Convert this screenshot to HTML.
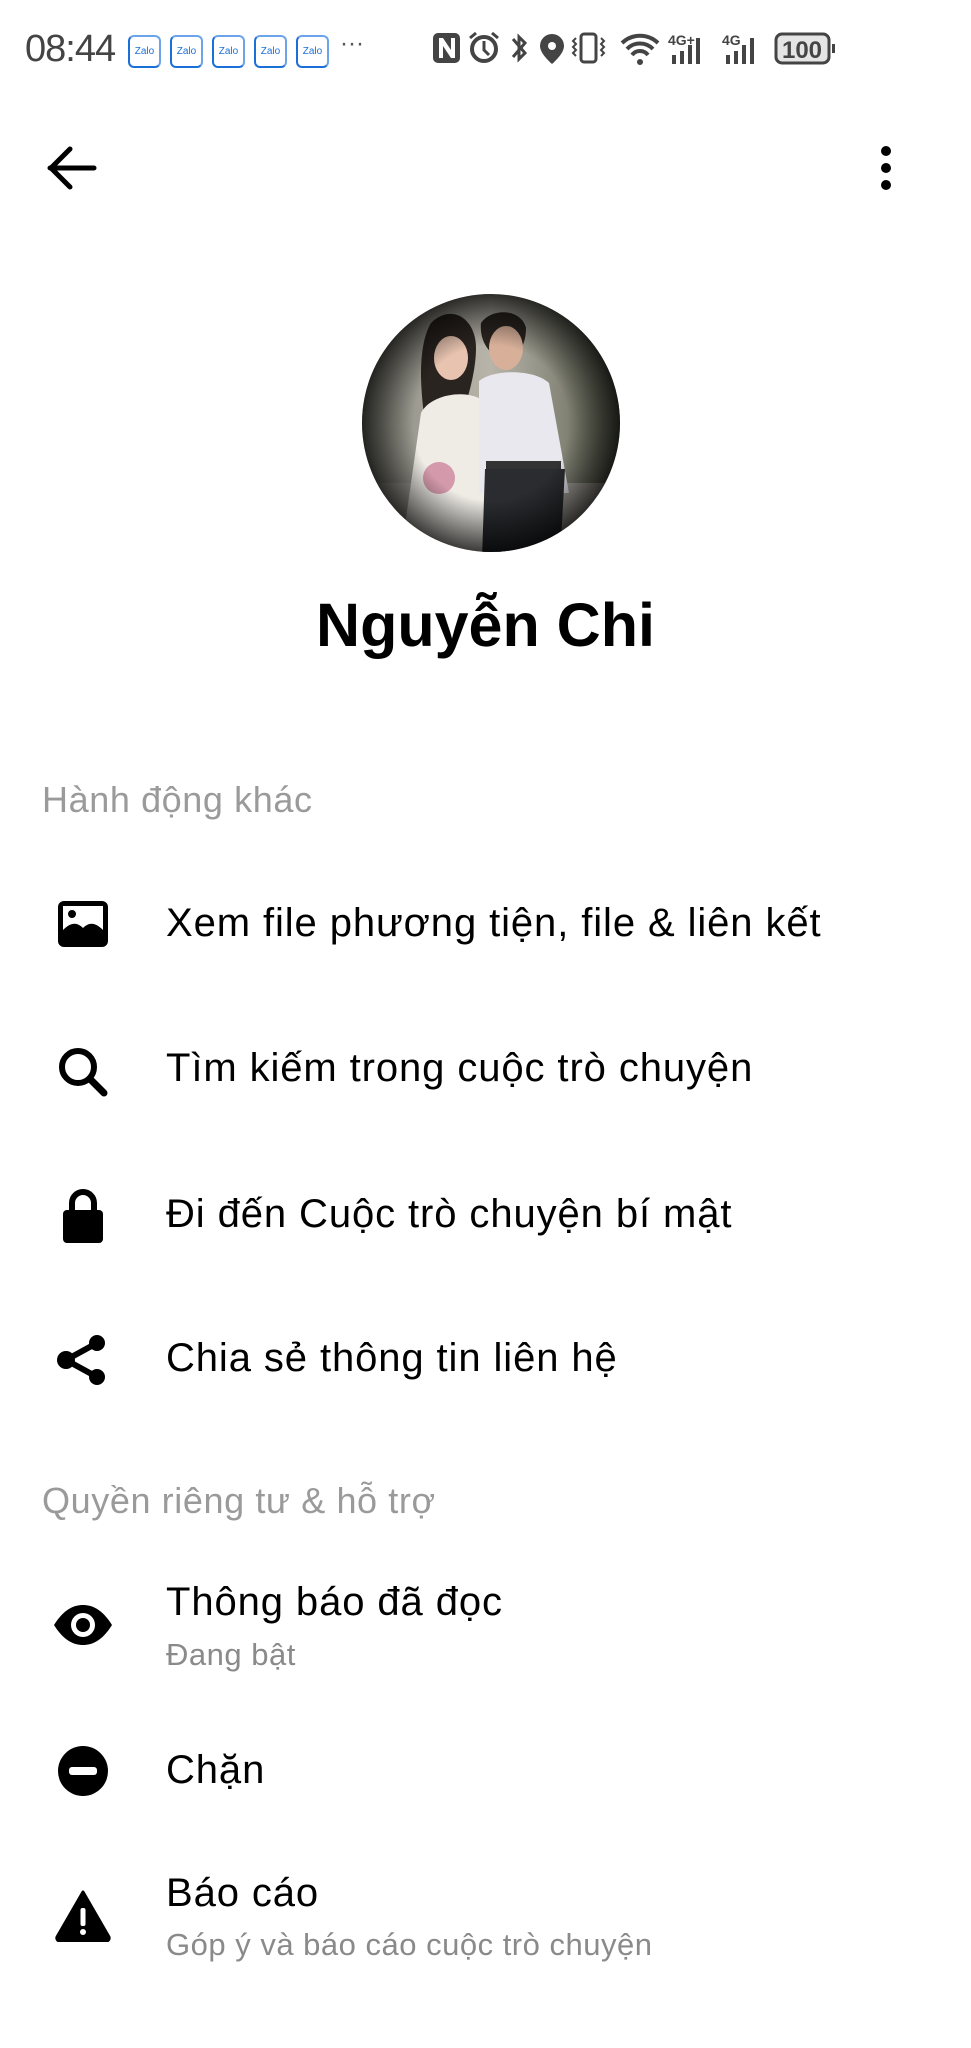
<!DOCTYPE html>
<html><head><meta charset="utf-8"><style>
html,body{margin:0;padding:0;background:#fff;}
body{width:971px;height:2048px;position:relative;overflow:hidden;font-family:"Liberation Sans","DejaVu Sans",sans-serif;color:#000;}
.a{position:absolute;white-space:nowrap;}
.sec{font-size:36px;letter-spacing:0.6px;color:#9a9a9a;left:42px;}
.item{font-size:40px;letter-spacing:0.9px;left:166px;}
.sub{font-size:31px;letter-spacing:0.5px;color:#8a8a8a;left:166px;}
.zalo{position:absolute;top:35px;width:29px;height:29px;border:2px solid #1a6fd8;border-top-color:#6ba4ea;border-right-color:#6ba4ea;border-radius:6px;background:#fff;font-size:10px;color:#1a6fd8;text-align:center;line-height:29px;}
</style></head><body>
<div class="a" style="left:25px;top:28px;font-size:38px;color:#444;letter-spacing:-1px;">08:44</div>
<div class="zalo" style="left:128px">Zalo</div>
<div class="zalo" style="left:170px">Zalo</div>
<div class="zalo" style="left:212px">Zalo</div>
<div class="zalo" style="left:254px">Zalo</div>
<div class="zalo" style="left:296px">Zalo</div>
<div class="a" style="left:340px;top:30px;font-size:24px;color:#555;">···</div>
<svg class="a" style="left:420px;top:28px" width="420" height="40" viewBox="0 0 420 40" fill="#444">
 <rect x="13" y="5" width="27" height="30" rx="5"/><path d="M19 10v20h4V18l8 12h4V10h-4v12L23 10z" fill="#fff"/>
 <circle cx="64" cy="21" r="12" fill="none" stroke="#444" stroke-width="4"/><path d="M64 13v9l5 5" stroke="#444" stroke-width="3" fill="none"/><path d="M50 10l6-5M78 10l-6-5" stroke="#444" stroke-width="3"/>
 <path d="M93 11l12 14-6 6V9l6 6-12 14" stroke="#444" stroke-width="3" fill="none"/>
 <path d="M132 6a12 12 0 0 1 12 12c0 8-12 18-12 18s-12-10-12-18a12 12 0 0 1 12-12z"/><circle cx="132" cy="18" r="4" fill="#fff"/>
 <rect x="161" y="6" width="15" height="28" rx="3" fill="none" stroke="#444" stroke-width="3"/><path d="M156 10l-3 3 3 3-3 3 3 3-3 3 3 3M181 10l3 3-3 3 3 3-3 3 3 3-3 3" stroke="#444" stroke-width="2" fill="none"/>
 <path d="M202 15a26 26 0 0 1 36 0M207 21a18 18 0 0 1 26 0M212 27a10 10 0 0 1 16 0" stroke="#444" stroke-width="4" fill="none"/><circle cx="220" cy="34" r="3"/>
 <text x="248" y="17" font-size="14" font-weight="bold" font-family="Liberation Sans">4G+</text>
 <rect x="252" y="27" width="4" height="9"/><rect x="260" y="23" width="4" height="13"/><rect x="268" y="17" width="4" height="19"/><rect x="276" y="10" width="4" height="26"/>
 <text x="302" y="17" font-size="14" font-weight="bold" font-family="Liberation Sans">4G</text>
 <rect x="306" y="27" width="4" height="9"/><rect x="314" y="23" width="4" height="13"/><rect x="322" y="17" width="4" height="19"/><rect x="330" y="10" width="4" height="26"/>
 <rect x="356" y="6" width="53" height="29" rx="6" fill="#e4e4e4" stroke="#444" stroke-width="3"/>
 <text x="382" y="30" font-size="24" font-weight="bold" text-anchor="middle" font-family="Liberation Sans">100</text>
 <rect x="412" y="16" width="3" height="9"/>
</svg>
<svg class="a" style="left:46px;top:146px" width="52" height="44" viewBox="0 0 52 44"><path d="M4 22h44M24 3L5 22l19 19" stroke="#000" stroke-width="5" fill="none" stroke-linecap="round" stroke-linejoin="round"/></svg>
<svg class="a" style="left:876px;top:144px" width="20" height="48"><circle cx="10" cy="7" r="5"/><circle cx="10" cy="24" r="5"/><circle cx="10" cy="41" r="5"/></svg>
<svg class="a" style="left:361px;top:293px" width="260" height="260" viewBox="0 0 260 260">
 <defs>
  <clipPath id="c"><circle cx="130" cy="130" r="129"/></clipPath>
  <radialGradient id="v" cx="50%" cy="50%" r="50%"><stop offset="60%" stop-color="#000" stop-opacity="0"/><stop offset="100%" stop-color="#000" stop-opacity=".75"/></radialGradient>
  <linearGradient id="bg" x1="0" y1="0" x2="1" y2="0"><stop offset="0" stop-color="#8a8a80"/><stop offset=".5" stop-color="#b8b4aa"/><stop offset="1" stop-color="#5a5f4e"/></linearGradient>
 </defs>
 <g clip-path="url(#c)">
  <rect width="260" height="260" fill="url(#bg)"/>
  <rect y="190" width="260" height="70" fill="#a8a49c"/>
  <path d="M70 30c20-20 45-5 45 25 0 25-10 60-20 80l-30 0c-5-30-10-80 5-105z" fill="#2a2420"/>
  <ellipse cx="90" cy="65" rx="17" ry="22" fill="#e8c4b0"/>
  <path d="M60 120c10-20 50-25 65-10l10 150H40z" fill="#efece6"/>
  <circle cx="78" cy="185" r="16" fill="#d49aac"/>
  <path d="M120 30c10-15 40-15 45 5 0 20-10 30-22 30s-25-15-23-35z" fill="#2a2420"/>
  <ellipse cx="145" cy="55" rx="17" ry="22" fill="#d8b09a"/>
  <path d="M118 88c15-12 55-12 70 2l20 110h-90z" fill="#e9e8ee"/>
  <rect x="125" y="168" width="75" height="10" fill="#333"/>
  <path d="M124 176h80l-5 90h-78z" fill="#2a2c30"/>
 </g>
 <circle cx="130" cy="130" r="129" fill="url(#v)"/>
</svg>
<div class="a" style="left:0;width:971px;text-align:center;top:590px;font-size:61px;font-weight:bold;">Nguyễn Chi</div>
<div class="a sec" style="top:779px">Hành động khác</div>
<svg class="a" style="left:57px;top:900px" width="52" height="48" viewBox="0 0 52 48"><rect x="1" y="1" width="50" height="46" rx="6"/><rect x="6" y="6" width="40" height="33" fill="#fff"/><circle cx="15" cy="14" r="4"/><path d="M6 40V30c8-8 14-8 20-2 6-6 12-6 20 2v10z"/></svg>
<div class="a item" style="top:901px">Xem file phương tiện, file &amp; liên kết</div>
<svg class="a" style="left:57px;top:1046px" width="52" height="52" viewBox="0 0 52 52"><circle cx="21" cy="21" r="16" fill="none" stroke="#000" stroke-width="6"/><path d="M33 33l14 14" stroke="#000" stroke-width="7" stroke-linecap="round"/></svg>
<div class="a item" style="top:1046px">Tìm kiếm trong cuộc trò chuyện</div>
<svg class="a" style="left:62px;top:1188px" width="42" height="56" viewBox="0 0 42 56"><path d="M10 24V15a11 11 0 0 1 22 0v9" stroke="#000" stroke-width="6" fill="none"/><rect x="1" y="22" width="40" height="33" rx="4"/></svg>
<div class="a item" style="top:1192px">Đi đến Cuộc trò chuyện bí mật</div>
<svg class="a" style="left:57px;top:1334px" width="48" height="52" viewBox="0 0 48 52"><circle cx="40" cy="9" r="8"/><circle cx="9" cy="26" r="9"/><circle cx="40" cy="43" r="8"/><path d="M40 9L9 26l31 17" stroke="#000" stroke-width="6" fill="none"/></svg>
<div class="a item" style="top:1336px">Chia sẻ thông tin liên hệ</div>
<div class="a sec" style="top:1480px">Quyền riêng tư &amp; hỗ trợ</div>
<svg class="a" style="left:52px;top:1603px" width="62" height="44" viewBox="0 0 62 44"><path d="M2 22C12 6 22 2 31 2s19 4 29 20C50 38 40 42 31 42S12 38 2 22z"/><circle cx="31" cy="22" r="12" fill="#fff"/><circle cx="31" cy="22" r="7"/></svg>
<div class="a item" style="top:1580px">Thông báo đã đọc</div>
<div class="a sub" style="top:1637px">Đang bật</div>
<svg class="a" style="left:57px;top:1745px" width="52" height="52" viewBox="0 0 52 52"><circle cx="26" cy="26" r="25"/><rect x="12" y="22" width="28" height="8" rx="3" fill="#fff"/></svg>
<div class="a item" style="top:1748px">Chặn</div>
<svg class="a" style="left:55px;top:1890px" width="56" height="52" viewBox="0 0 56 52"><path d="M28 2L54 47a3 3 0 0 1-3 4H5a3 3 0 0 1-3-4z" stroke="#000" stroke-width="3" stroke-linejoin="round"/><rect x="25.5" y="18" width="5" height="18" rx="2" fill="#fff"/><circle cx="28" cy="42" r="3" fill="#fff"/></svg>
<div class="a item" style="top:1871px">Báo cáo</div>
<div class="a sub" style="top:1927px">Góp ý và báo cáo cuộc trò chuyện</div>
</body></html>
